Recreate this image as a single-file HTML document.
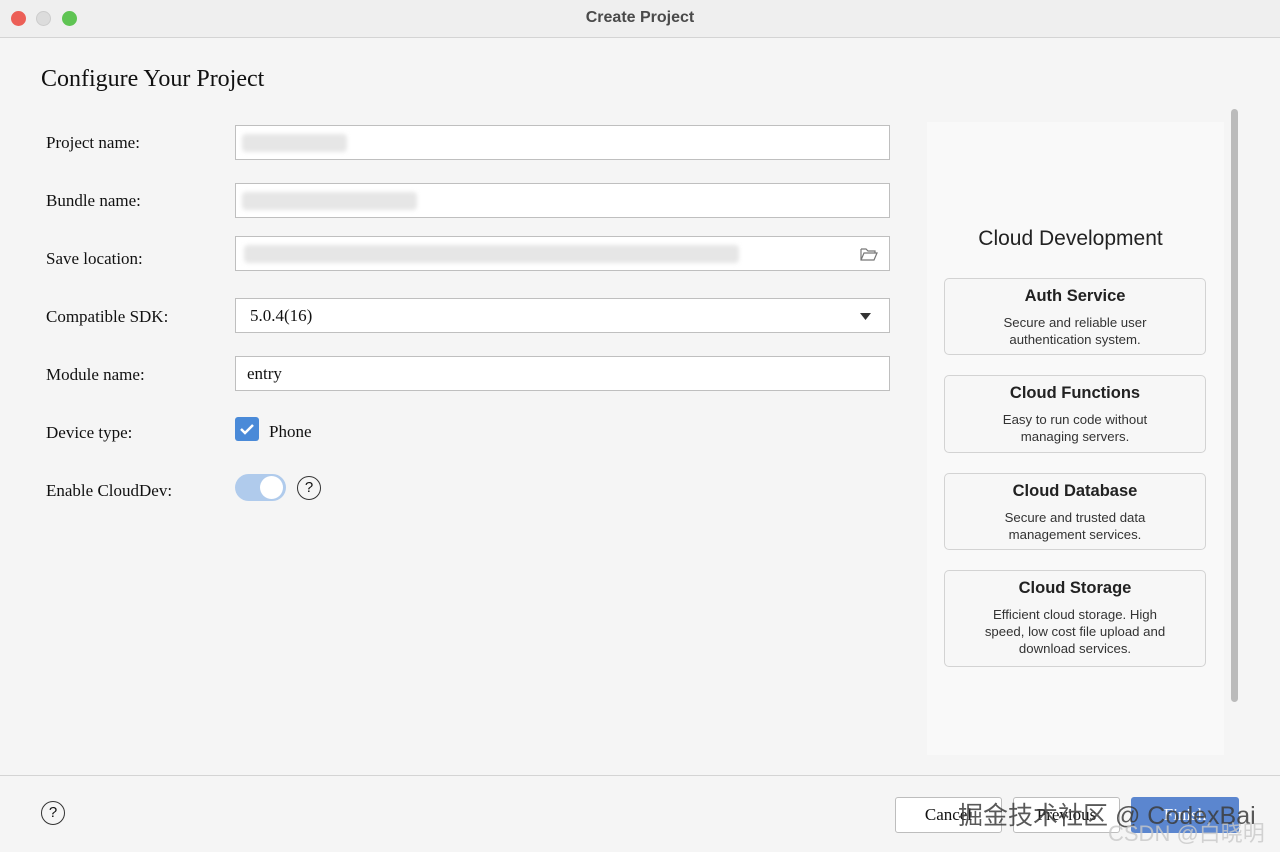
<!DOCTYPE html>
<html><head><meta charset="utf-8"><style>
*{box-sizing:border-box;margin:0;padding:0}
body{width:1280px;height:852px;background:#f5f5f5;font-family:"Liberation Serif",serif;position:relative;overflow:hidden;color:#111}
.abs{position:absolute}
.title{top:0;left:0;width:1280px;height:38px;background:#efefef;border-bottom:1px solid #d4d4d4;text-align:center;font:bold 16px "Liberation Sans",sans-serif;color:#4a4a4a;line-height:36px}
.dot{top:11px;width:15px;height:15px;border-radius:50%}
.lbl{left:46px;font-size:17px}
.inp{left:235px;width:655px;height:35px;background:#fff;border:1px solid #bfbfbf}
.blur{position:absolute;top:8px;height:18px;background:#e6e6e6;border-radius:4px;filter:blur(2px)}
.card{left:944px;width:262px;background:#f7f7f7;border:1px solid #d3d3d3;border-radius:5px;text-align:center;font-family:"Liberation Sans",sans-serif}
.card b{display:block;font-size:16.5px;color:#222;margin-top:8px}
.card p{font-size:13.2px;color:#333;line-height:17px;margin-top:8px}
.btn{top:797px;height:36px;background:#fff;border:1px solid #bdbdbd;border-radius:3px;font-size:17px;line-height:34px;text-align:center}
</style></head><body>
<div class="abs title">Create Project</div>
<div class="abs dot" style="left:11px;background:#ec5f57"></div>
<div class="abs dot" style="left:36px;background:#dcdcdc;border:1px solid #ccc"></div>
<div class="abs dot" style="left:62px;background:#5fc453"></div>
<div class="abs" style="left:41px;top:66px;font-size:24px">Configure Your Project</div>

<div class="abs lbl" style="top:133px">Project name:</div>
<div class="abs inp" style="top:125px"><div class="blur" style="left:6px;width:105px"></div></div>
<div class="abs lbl" style="top:191px">Bundle name:</div>
<div class="abs inp" style="top:183px"><div class="blur" style="left:6px;width:175px"></div></div>
<div class="abs lbl" style="top:249px">Save location:</div>
<div class="abs inp" style="top:236px"><div class="blur" style="left:8px;width:495px"></div>
<svg class="abs" style="left:624px;top:10px" width="18" height="14" viewBox="0 0 18 14"><path d="M1 2h5l2 2h7v2M1 2v11h13l3-7H4L1 13" fill="none" stroke="#777" stroke-width="1.2"/></svg></div>
<div class="abs lbl" style="top:307px">Compatible SDK:</div>
<div class="abs inp" style="top:298px;font-size:17px;padding:7px 14px">5.0.4(16)
<svg class="abs" style="left:624px;top:14px" width="11" height="7"><path d="M0 0h11L5.5 7z" fill="#333"/></svg></div>
<div class="abs lbl" style="top:365px">Module name:</div>
<div class="abs inp" style="top:356px;font-size:17px;padding:7px 11px">entry</div>
<div class="abs lbl" style="top:423px">Device type:</div>
<div class="abs" style="left:235px;top:417px;width:24px;height:24px;background:#4a8ad8;border-radius:3px">
<svg width="24" height="24"><path d="M6 12l4 4 8-8" fill="none" stroke="#fff" stroke-width="2.5"/></svg></div>
<div class="abs" style="left:269px;top:422px;font-size:17px">Phone</div>
<div class="abs lbl" style="top:481px">Enable CloudDev:</div>
<div class="abs" style="left:235px;top:474px;width:51px;height:27px;background:#b0cbec;border-radius:14px"><div class="abs" style="left:25px;top:2px;width:23px;height:23px;border-radius:50%;background:#fff"></div></div>
<div class="abs" style="left:297px;top:476px;width:24px;height:24px;border:1.5px solid #333;border-radius:50%;text-align:center;font:15px/21px 'Liberation Sans',sans-serif">?</div>

<div class="abs" style="left:927px;top:122px;width:297px;height:633px;background:#f9f9f9"></div>
<div class="abs" style="left:1231px;top:109px;width:7px;height:593px;background:#bbb;border-radius:4px"></div>
<div class="abs" style="left:927px;top:227px;width:287px;text-align:center;font:21px 'Liberation Sans',sans-serif;color:#222">Cloud Development</div>
<div class="abs card" style="top:278px;height:77px"><b>Auth Service</b><p>Secure and reliable user<br>authentication system.</p></div>
<div class="abs card" style="top:375px;height:78px"><b>Cloud Functions</b><p>Easy to run code without<br>managing servers.</p></div>
<div class="abs card" style="top:473px;height:77px"><b>Cloud Database</b><p>Secure and trusted data<br>management services.</p></div>
<div class="abs card" style="top:570px;height:97px"><b>Cloud Storage</b><p>Efficient cloud storage. High<br>speed, low cost file upload and<br>download services.</p></div>

<div class="abs" style="left:0;top:775px;width:1280px;height:1px;background:#d4d4d4"></div>
<div class="abs" style="left:41px;top:801px;width:24px;height:24px;border:1.5px solid #333;border-radius:50%;text-align:center;font:15px/21px 'Liberation Sans',sans-serif">?</div>
<div class="abs btn" style="left:895px;width:107px">Cancel</div>
<div class="abs btn" style="left:1013px;width:107px">Previous</div>
<div class="abs btn" style="left:1131px;width:108px;background:#5b86cf;border-color:#5b86cf;color:#fff">Finish</div>
<div class="abs" style="left:958px;top:796px;font:25px 'Liberation Sans','Noto Sans CJK SC',sans-serif;color:rgba(60,60,60,.85)">掘金技术社区 @ CodexBai</div>
<div class="abs" style="left:1108px;top:816px;font:22px 'Liberation Sans','Noto Sans CJK SC',sans-serif;color:rgba(200,200,200,.8)">CSDN @白晓明</div>
</body></html>
